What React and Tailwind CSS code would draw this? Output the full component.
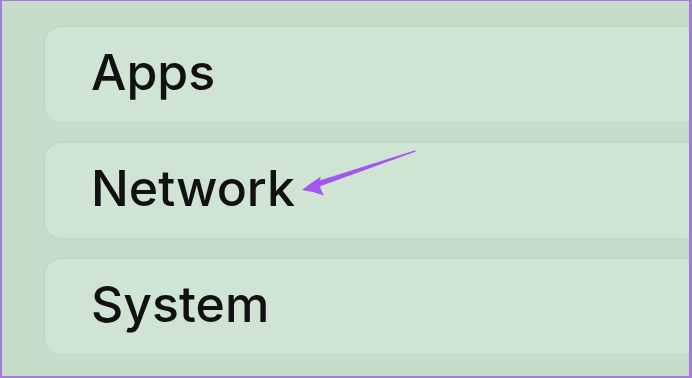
import React from 'react';

const items = ['Apps', 'Network', 'System'];

function Arrow() {
  return (
    <svg className="absolute inset-0 pointer-events-none" width="692" height="378" viewBox="0 0 692 378">
      {/* tapered shaft */}
      <path d="M413.4 149.2 L413.9 150.6 L314 186.8 L312 181.2 Z" fill="#a257ee" />
      {/* head with concave back */}
      <path d="M300 189 Q310 181 319 175.5 Q315 183 322 194.5 Q311 190 300 189 Z" fill="#a257ee" />
    </svg>
  );
}

export default function App() {
  return (
    <div
      className="relative w-[692px] h-[378px] overflow-hidden bg-[#c7dcc9] border-[#a47ae0] border-t border-l-2 border-r-[3px] border-b-2 flex flex-col gap-[21px] pt-[26px] pl-[43px]"
      style={{ fontFamily: 'Inter, "Liberation Sans", sans-serif' }}
    >
      {items.map((label) => (
        <div
          key={label}
          className="h-[95px] shrink-0 rounded-l-[16px] bg-[#d0e4d4] shadow-[0_0_3px_rgba(150,180,155,0.35)] flex items-center pl-[46px] pb-[6px]"
        >
          <span className="text-[50px] leading-none font-medium text-[#111]">{label}</span>
        </div>
      ))}
      <Arrow />
    </div>
  );
}
